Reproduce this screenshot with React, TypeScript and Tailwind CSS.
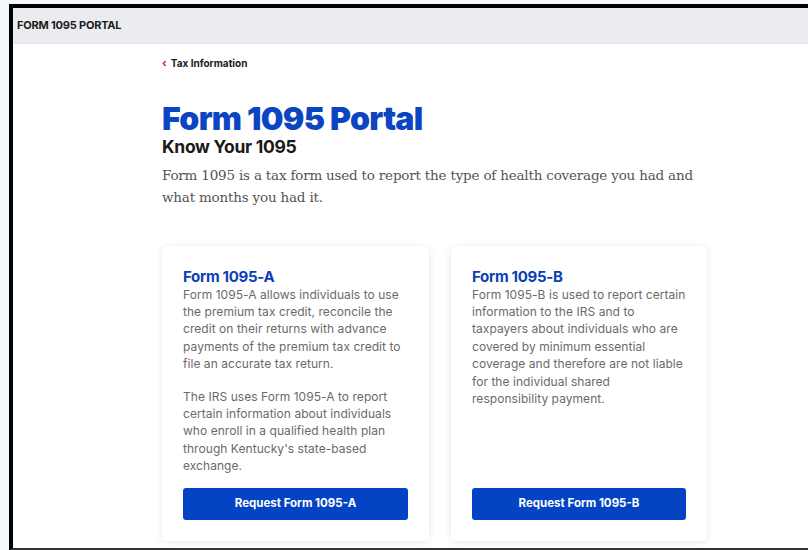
const forms = [
  {
    id: "A",
    width: "w-[267px]",
    paragraphs: [
      "Form 1095-A allows individuals to use the premium tax credit, reconcile the credit on their returns with advance payments of the premium tax credit to file an accurate tax return.",
      "The IRS uses Form 1095-A to report certain information about individuals who enroll in a qualified health plan through Kentucky's state-based exchange.",
    ],
  },
  {
    id: "B",
    width: "w-[256px]",
    paragraphs: [
      "Form 1095-B is used to report certain information to the IRS and to taxpayers about individuals who are covered by minimum essential coverage and therefore are not liable for the individual shared responsibility payment.",
    ],
  },
];

function FormCard({ id, width, paragraphs }: (typeof forms)[number]) {
  return (
    <div
      className={`${width} flex flex-col rounded-[4px] bg-white px-[21px] pt-[22px] pb-[21px] shadow-[0_1px_6px_rgba(30,50,90,0.12)]`}
    >
      <h2 className="text-[15px] leading-[18px] font-bold tracking-[-0.3px] text-[#0b3fb8]">Form 1095-{id}</h2>
      <div className="flex-1 space-y-[15px] text-[12px] leading-[17.4px] tracking-[0.05px] text-[#6a6a6a]">
        {paragraphs.map((p) => (
          <p key={p.slice(0, 20)}>{p}</p>
        ))}
      </div>
      <button
        type="button"
        className="mt-[13px] h-[32px] w-full rounded-[3px] bg-[#0444c4] text-[11.5px] font-bold text-white"
      >
        Request Form 1095-{id}
      </button>
    </div>
  );
}

export default function App() {
  return (
    <div
      className="h-[550px] w-[808px] overflow-hidden bg-[#f4f8fb] pt-[4px] pl-[9px]"
      style={{ fontFamily: "Inter, 'Noto Sans', sans-serif" }}
    >
      <div className="flex h-full flex-col border-t-4 border-b-2 border-l-4 border-t-black border-b-[#333] border-l-black bg-white">
        <header className="flex h-[36px] shrink-0 items-center border-b border-[#e2e4ea] bg-[#ebecf0] px-[4px]">
          <span className="text-[11px] font-bold tracking-[-0.2px] text-[#1a1a1a]">FORM 1095 PORTAL</span>
        </header>

        <main className="flex-1 pl-[149px]">
          <a href="#" className="mt-[11px] flex items-center gap-[4px] text-[10px] font-bold text-[#1a1a1a]">
            <span className="text-[11px] text-[#c2185b]">‹</span>
            Tax Information
          </a>

          <h1 className="mt-[29px] text-[32px] leading-[36px] font-black tracking-[-0.7px] text-[#0b45c2]">
            Form 1095 Portal
          </h1>
          <h3 className="text-[17.5px] leading-[20px] font-bold tracking-[-0.3px] text-[#1a1a1a]">Know Your 1095</h3>
          <p
            className="mt-[7px] w-[540px] text-[13.5px] leading-[22px] tracking-[-0.2px] text-[#555]"
            style={{ fontFamily: "'DejaVu Serif', serif" }}
          >
            Form 1095 is a tax form used to report the type of health coverage you had and what months you had it.
          </p>

          <div className="mt-[38px] flex gap-[22px]">
            {forms.map((f) => (
              <FormCard key={f.id} {...f} />
            ))}
          </div>
        </main>
      </div>
    </div>
  );
}
